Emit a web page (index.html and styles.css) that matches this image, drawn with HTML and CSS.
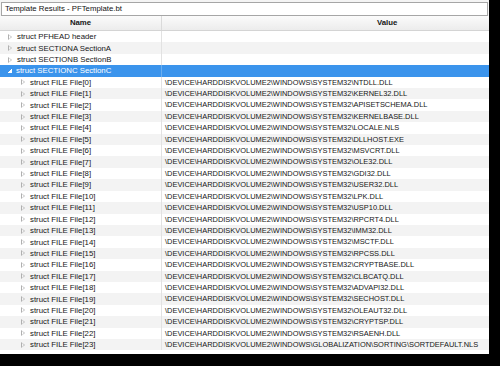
FILE: index.html
```html
<!DOCTYPE html>
<html lang="en">

<head>
    <meta charset="UTF-8">
    <title>Template Results</title>
    <link rel="stylesheet" href="styles.css">
</head>

<body>
    <div class="panel">
        <div class="title-bar">
            <div class="title-box">Template Results - PFTemplate.bt</div>
        </div>

        <div class="head-row">
            <div class="cell name">Name</div>
            <div class="cell value">Value</div>
        </div>

        <div class="rows">
            <div class="row">
                <div class="cell name"><span class="arrow"></span>struct PFHEAD header</div>
                <div class="cell value"></div>
            </div>
            <div class="row">
                <div class="cell name"><span class="arrow"></span>struct SECTIONA SectionA</div>
                <div class="cell value"></div>
            </div>
            <div class="row">
                <div class="cell name"><span class="arrow"></span>struct SECTIONB SectionB</div>
                <div class="cell value"></div>
            </div>
            <div class="row selected">
                <div class="cell name"><span class="arrow open"></span>struct SECTIONC SectionC</div>
                <div class="cell value"></div>
            </div>
            <div class="row child">
                <div class="cell name"><span class="arrow"></span>struct FILE File[0]</div>
                <div class="cell value">\DEVICE\HARDDISKVOLUME2\WINDOWS\SYSTEM32\NTDLL.DLL</div>
            </div>
            <div class="row child">
                <div class="cell name"><span class="arrow"></span>struct FILE File[1]</div>
                <div class="cell value">\DEVICE\HARDDISKVOLUME2\WINDOWS\SYSTEM32\KERNEL32.DLL</div>
            </div>
            <div class="row child">
                <div class="cell name"><span class="arrow"></span>struct FILE File[2]</div>
                <div class="cell value">\DEVICE\HARDDISKVOLUME2\WINDOWS\SYSTEM32\APISETSCHEMA.DLL</div>
            </div>
            <div class="row child">
                <div class="cell name"><span class="arrow"></span>struct FILE File[3]</div>
                <div class="cell value">\DEVICE\HARDDISKVOLUME2\WINDOWS\SYSTEM32\KERNELBASE.DLL</div>
            </div>
            <div class="row child">
                <div class="cell name"><span class="arrow"></span>struct FILE File[4]</div>
                <div class="cell value">\DEVICE\HARDDISKVOLUME2\WINDOWS\SYSTEM32\LOCALE.NLS</div>
            </div>
            <div class="row child">
                <div class="cell name"><span class="arrow"></span>struct FILE File[5]</div>
                <div class="cell value">\DEVICE\HARDDISKVOLUME2\WINDOWS\SYSTEM32\DLLHOST.EXE</div>
            </div>
            <div class="row child">
                <div class="cell name"><span class="arrow"></span>struct FILE File[6]</div>
                <div class="cell value">\DEVICE\HARDDISKVOLUME2\WINDOWS\SYSTEM32\MSVCRT.DLL</div>
            </div>
            <div class="row child">
                <div class="cell name"><span class="arrow"></span>struct FILE File[7]</div>
                <div class="cell value">\DEVICE\HARDDISKVOLUME2\WINDOWS\SYSTEM32\OLE32.DLL</div>
            </div>
            <div class="row child">
                <div class="cell name"><span class="arrow"></span>struct FILE File[8]</div>
                <div class="cell value">\DEVICE\HARDDISKVOLUME2\WINDOWS\SYSTEM32\GDI32.DLL</div>
            </div>
            <div class="row child">
                <div class="cell name"><span class="arrow"></span>struct FILE File[9]</div>
                <div class="cell value">\DEVICE\HARDDISKVOLUME2\WINDOWS\SYSTEM32\USER32.DLL</div>
            </div>
            <div class="row child">
                <div class="cell name"><span class="arrow"></span>struct FILE File[10]</div>
                <div class="cell value">\DEVICE\HARDDISKVOLUME2\WINDOWS\SYSTEM32\LPK.DLL</div>
            </div>
            <div class="row child">
                <div class="cell name"><span class="arrow"></span>struct FILE File[11]</div>
                <div class="cell value">\DEVICE\HARDDISKVOLUME2\WINDOWS\SYSTEM32\USP10.DLL</div>
            </div>
            <div class="row child">
                <div class="cell name"><span class="arrow"></span>struct FILE File[12]</div>
                <div class="cell value">\DEVICE\HARDDISKVOLUME2\WINDOWS\SYSTEM32\RPCRT4.DLL</div>
            </div>
            <div class="row child">
                <div class="cell name"><span class="arrow"></span>struct FILE File[13]</div>
                <div class="cell value">\DEVICE\HARDDISKVOLUME2\WINDOWS\SYSTEM32\IMM32.DLL</div>
            </div>
            <div class="row child">
                <div class="cell name"><span class="arrow"></span>struct FILE File[14]</div>
                <div class="cell value">\DEVICE\HARDDISKVOLUME2\WINDOWS\SYSTEM32\MSCTF.DLL</div>
            </div>
            <div class="row child">
                <div class="cell name"><span class="arrow"></span>struct FILE File[15]</div>
                <div class="cell value">\DEVICE\HARDDISKVOLUME2\WINDOWS\SYSTEM32\RPCSS.DLL</div>
            </div>
            <div class="row child">
                <div class="cell name"><span class="arrow"></span>struct FILE File[16]</div>
                <div class="cell value">\DEVICE\HARDDISKVOLUME2\WINDOWS\SYSTEM32\CRYPTBASE.DLL</div>
            </div>
            <div class="row child">
                <div class="cell name"><span class="arrow"></span>struct FILE File[17]</div>
                <div class="cell value">\DEVICE\HARDDISKVOLUME2\WINDOWS\SYSTEM32\CLBCATQ.DLL</div>
            </div>
            <div class="row child">
                <div class="cell name"><span class="arrow"></span>struct FILE File[18]</div>
                <div class="cell value">\DEVICE\HARDDISKVOLUME2\WINDOWS\SYSTEM32\ADVAPI32.DLL</div>
            </div>
            <div class="row child">
                <div class="cell name"><span class="arrow"></span>struct FILE File[19]</div>
                <div class="cell value">\DEVICE\HARDDISKVOLUME2\WINDOWS\SYSTEM32\SECHOST.DLL</div>
            </div>
            <div class="row child">
                <div class="cell name"><span class="arrow"></span>struct FILE File[20]</div>
                <div class="cell value">\DEVICE\HARDDISKVOLUME2\WINDOWS\SYSTEM32\OLEAUT32.DLL</div>
            </div>
            <div class="row child">
                <div class="cell name"><span class="arrow"></span>struct FILE File[21]</div>
                <div class="cell value">\DEVICE\HARDDISKVOLUME2\WINDOWS\SYSTEM32\CRYPTSP.DLL</div>
            </div>
            <div class="row child">
                <div class="cell name"><span class="arrow"></span>struct FILE File[22]</div>
                <div class="cell value">\DEVICE\HARDDISKVOLUME2\WINDOWS\SYSTEM32\RSAENH.DLL</div>
            </div>
            <div class="row child">
                <div class="cell name"><span class="arrow"></span>struct FILE File[23]</div>
                <div class="cell value">\DEVICE\HARDDISKVOLUME2\WINDOWS\GLOBALIZATION\SORTING\SORTDEFAULT.NLS</div>
            </div>
        </div>
    </div>
</body>

</html>
```

FILE: styles.css
```css
* {
    margin: 0;
    padding: 0;
    box-sizing: border-box;
}

body {
    width: 500px;
    height: 366px;
    background-color: #000;
    overflow: hidden;
    font-family: "Liberation Sans", Arial, sans-serif;
    font-size: 7.8px;
    color: #161616;
}

.panel {
    width: 489px;
    height: 354px;
    background-color: #fff;
    overflow: hidden;
}

.title-bar {
    height: 16px;
    padding: 2px 1px 0 1px;
    background-color: #f4f4f4;
}

.title-box {
    height: 14px;
    line-height: 12px;
    padding-left: 3px;
    border: 1px solid #a6a6a6;
    background-color: #fff;
    color: #111;
}

.head-row {
    display: grid;
    grid-template-columns: 162px 1fr;
    height: 15px;
    line-height: 14px;
    font-weight: bold;
    background: linear-gradient(#fbfbfb, #ececec);
    border-bottom: 1px solid #d4d4d4;
}

.head-row .cell {
    border-right: 1px solid #dadada;
}

.head-row .name {
    text-align: center;
}

.head-row .value {
    padding-left: 215px;
    border-right: none;
}

.row {
    display: grid;
    grid-template-columns: 162px 1fr;
    height: 11.42px;
    line-height: 11px;
    white-space: nowrap;
}

.row:nth-child(even) {
    background-color: #f3f3f3;
}

.row .cell {
    overflow: hidden;
}

.row .name {
    display: flex;
    align-items: center;
    padding-left: 8px;
    border-right: 1px solid #e2e2e2;
}

.row .value {
    padding-left: 3px;
    font-size: 7.45px;
}

.row.child .name {
    padding-left: 21px;
}

.row.selected {
    background-color: #3b94ec;
    color: #fff;
}

.row.selected .name {
    border-right-color: #6aaef0;
}

.arrow {
    width: 0;
    height: 0;
    margin-right: 5px;
    border-top: 3px solid transparent;
    border-bottom: 3px solid transparent;
    border-left: 4px solid #b0b0b0;
    position: relative;
}

.arrow::after {
    content: "";
    position: absolute;
    left: -3px;
    top: -2px;
    border-top: 2px solid transparent;
    border-bottom: 2px solid transparent;
    border-left: 2px solid #fff;
}

.row:nth-child(even) .arrow::after {
    border-left-color: #f3f3f3;
}

.arrow.open {
    border: none;
    width: 4px;
    height: 4px;
    margin-right: 4px;
    background: linear-gradient(135deg, transparent 50%, #fff 50%);
}

.arrow.open::after {
    display: none;
}
```
